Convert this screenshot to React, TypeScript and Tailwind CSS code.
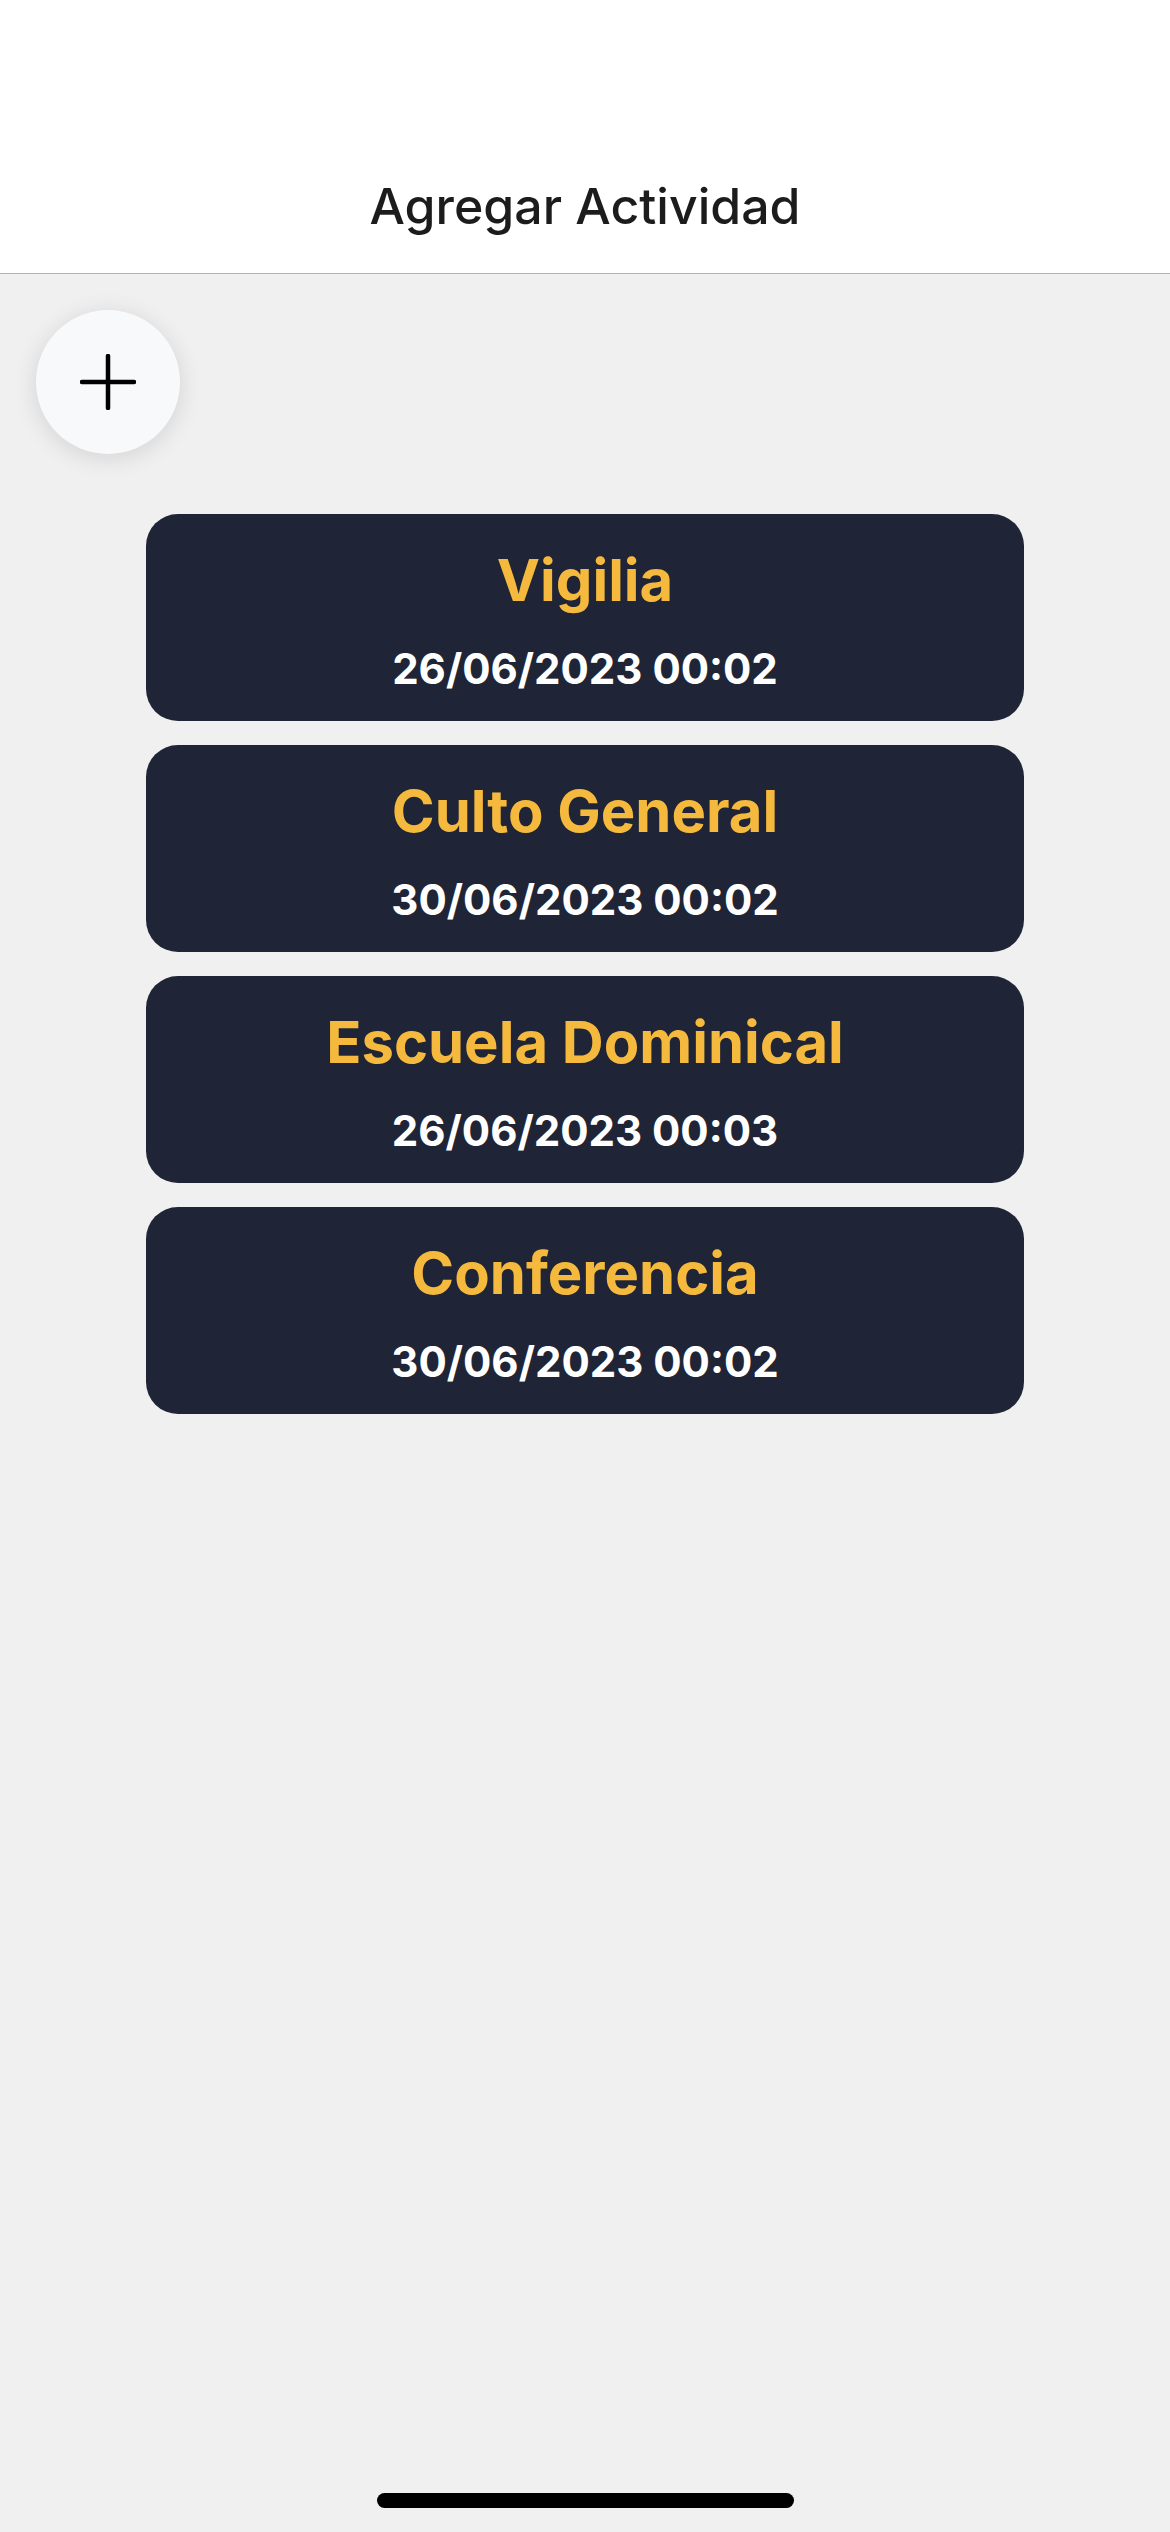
import React from 'react';

interface Activity {
  id: number;
  name: string;
  date: string;
}

const activities: Activity[] = [
  { id: 1, name: 'Vigilia', date: '26/06/2023 00:02' },
  { id: 2, name: 'Culto General', date: '30/06/2023 00:02' },
  { id: 3, name: 'Escuela Dominical', date: '26/06/2023 00:03' },
  { id: 4, name: 'Conferencia', date: '30/06/2023 00:02' },
];

const ActivityCard: React.FC<{ activity: Activity }> = ({ activity }) => (
  <div className="w-[878px] h-[207px] rounded-[32px] bg-[#1f2536] flex flex-col items-center pt-[30px]">
    <span className="text-[58px] leading-[72px] font-bold text-[#f5b93d]">{activity.name}</span>
    <span className="mt-[27px] text-[42px] leading-[52px] font-bold text-white">{activity.date}</span>
  </div>
);

export default function App() {
  return (
    <div className="min-h-screen flex flex-col bg-[#f0f0f0]" style={{ fontFamily: 'Inter, Roboto, "Liberation Sans", sans-serif' }}>
      {/* Header */}
      <header className="h-[274px] bg-white border-b border-[#b3b3b3] flex justify-center pt-[174px]">
        <h1 className="text-[50px] leading-[64px] font-medium text-[#1c1c1c]">Agregar Actividad</h1>
      </header>

      {/* Add button */}
      <button className="ml-[36px] mt-[36px] w-[144px] h-[144px] rounded-full bg-[#f8f9fb] shadow-[0_4px_24px_rgba(0,0,0,0.12)] flex items-center justify-center">
        <svg width="56" height="56" viewBox="0 0 56 56" fill="none" stroke="black" strokeWidth={4.5} strokeLinecap="round">
          <path d="M28 2v52M2 28h52" />
        </svg>
      </button>

      {/* Activities */}
      <div className="mt-[60px] flex flex-col items-center gap-[24px]">
        {activities.map((a) => (
          <ActivityCard key={a.id} activity={a} />
        ))}
      </div>

      <div className="flex-1" />

      {/* Home indicator */}
      <div className="flex justify-center pb-[24px]">
        <div className="w-[417px] h-[15px] rounded-full bg-black" />
      </div>
    </div>
  );
}
